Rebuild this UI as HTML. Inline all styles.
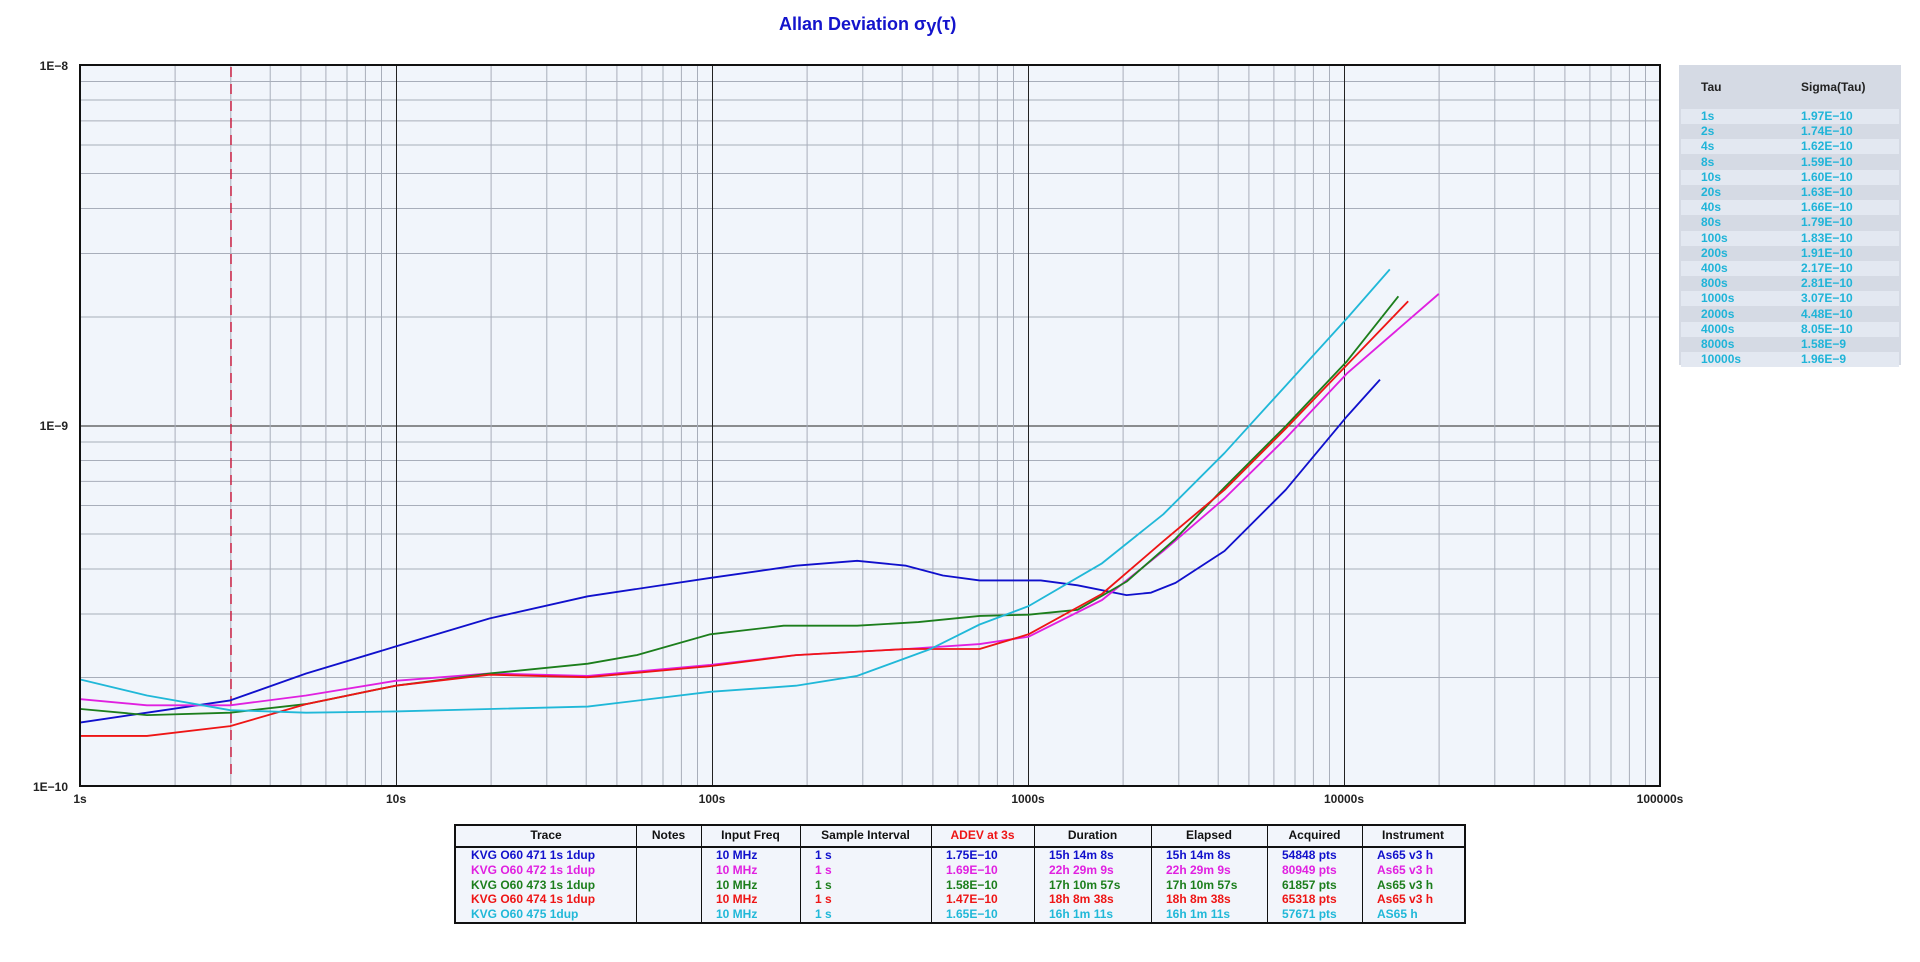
<!DOCTYPE html>
<html><head><meta charset="utf-8"><style>
body{margin:0;width:1920px;height:962px;background:#fff;overflow:hidden;font-family:"Liberation Sans",sans-serif;position:relative}
.t{position:absolute;font-weight:bold}
#tbl{position:absolute;left:454px;top:824px;width:1012px;height:100px;border:2px solid #111;box-sizing:border-box;background:#f2f5fb;overflow:hidden}
#tbl .hd{position:absolute;left:0;top:0;right:0;height:20px;border-bottom:2px solid #111}
.col{position:absolute;top:0;bottom:0;border-left:1px solid #111}
.c{position:absolute;font:bold 12px "Liberation Sans Narrow","Liberation Sans",sans-serif;white-space:nowrap;line-height:15px}
#panel{position:absolute;left:1679px;top:65px;width:222px;height:300px;background:#d5dae4}
.r{position:absolute;left:2px;right:2px;height:15px;font:bold 12px "Liberation Sans Narrow","Liberation Sans",sans-serif;color:#1fb4d8;line-height:15px}
</style></head><body>
<div class="t" style="left:779px;top:14px;font-size:18px;color:#1414cc">Allan Deviation σ<sub style="font-size:18px;position:relative;top:2px;vertical-align:baseline">y</sub>(τ)</div>

<svg width="1920" height="962" style="position:absolute;left:0;top:0">
<defs>
<pattern id="pv" patternUnits="userSpaceOnUse" x="80" y="0" width="316" height="962">
<g stroke="#a8aeba" stroke-width="1">
<line x1="95.1" y1="0" x2="95.1" y2="962"/><line x1="150.8" y1="0" x2="150.8" y2="962"/><line x1="190.2" y1="0" x2="190.2" y2="962"/><line x1="220.9" y1="0" x2="220.9" y2="962"/><line x1="245.9" y1="0" x2="245.9" y2="962"/><line x1="267" y1="0" x2="267" y2="962"/><line x1="285.4" y1="0" x2="285.4" y2="962"/><line x1="301.5" y1="0" x2="301.5" y2="962"/></g>
<line x1="0.5" y1="0" x2="0.5" y2="962" stroke="#222" stroke-width="1"/>
</pattern>
<pattern id="ph" patternUnits="userSpaceOnUse" x="0" y="65" width="1920" height="360.5">
<g stroke="#a8aeba" stroke-width="1">
<line x1="0" x2="1920" y1="252" y2="252"/><line x1="0" x2="1920" y1="188.5" y2="188.5"/><line x1="0" x2="1920" y1="143.5" y2="143.5"/><line x1="0" x2="1920" y1="108.5" y2="108.5"/><line x1="0" x2="1920" y1="80" y2="80"/><line x1="0" x2="1920" y1="55.9" y2="55.9"/><line x1="0" x2="1920" y1="35" y2="35"/><line x1="0" x2="1920" y1="16.5" y2="16.5"/></g>
<line x1="0" x2="1920" y1="0.5" y2="0.5" stroke="#222"/>
</pattern>
</defs>
<rect x="80" y="65" width="1580" height="721" fill="#f1f5fb"/>
<rect x="80" y="65" width="1580" height="721" fill="url(#ph)"/>
<rect x="80" y="65" width="1580" height="721" fill="url(#pv)"/>
<line x1="231" y1="67" x2="231" y2="776" stroke="#cc2244" stroke-width="1.5" stroke-dasharray="10,7"/>
<g transform="scale(1.2245)" fill="none" stroke-width="1.5" stroke-linejoin="round">
<polyline stroke="#1010cc" points="66,590 120,582 188,572 250,550 323,528 400,505 480,487 580,472 650,462 700,458 740,462 770,470 800,474 850,474 880,478 920,486 940,484 960,476 1000,450 1050,400 1100,340 1127,310"/>
<polyline stroke="#e020e0" points="66,571 120,576 188,576 250,568 323,556 400,550 480,552 580,543 650,535 740,530 800,526 840,520 900,490 950,450 1000,407 1050,358 1100,305 1175,240"/>
<polyline stroke="#1c7e1c" points="66,579 120,584 188,582 250,575 323,560 400,550 480,542 520,535 580,518 640,511 700,511 750,508 800,503 840,502 880,498 920,475 960,440 1000,398 1050,348 1100,295 1142,242"/>
<polyline stroke="#ee1515" points="66,601 120,601 188,593 250,575 323,560 400,551 480,553 580,544 650,535 740,530 800,530 840,518 900,485 950,442 1000,400 1050,350 1100,298 1150,246"/>
<polyline stroke="#20b8d8" points="66,555 120,568 188,580 250,582 323,581 400,579 480,577 580,565 650,560 700,552 760,530 800,510 840,495 900,460 950,420 1000,370 1050,315 1100,260 1135,220"/>
</g>
<rect x="80" y="65" width="1580" height="721" fill="none" stroke="#111" stroke-width="2"/>
<g font-family="Liberation Sans Narrow, Liberation Sans, sans-serif" font-weight="bold" font-size="12" fill="#222">
<text x="68" y="70" text-anchor="end">1E−8</text>
<text x="68" y="430" text-anchor="end">1E−9</text>
<text x="68" y="791" text-anchor="end">1E−10</text>
<text x="80" y="803" text-anchor="middle">1s</text>
<text x="396" y="803" text-anchor="middle">10s</text>
<text x="712" y="803" text-anchor="middle">100s</text>
<text x="1028" y="803" text-anchor="middle">1000s</text>
<text x="1344" y="803" text-anchor="middle">10000s</text>
<text x="1660" y="803" text-anchor="middle">100000s</text>
</g>
</svg>

<div id="panel">
<div class="c" style="left:22px;top:15px;color:#222">Tau</div>
<div class="c" style="left:122px;top:15px;color:#222">Sigma(Tau)</div>
</div>

<div id="tbl">
<div class="hd"></div>
<div class="col" style="left:180px"></div><div class="col" style="left:245px"></div><div class="col" style="left:344px"></div><div class="col" style="left:475px"></div><div class="col" style="left:578px"></div><div class="col" style="left:695px"></div><div class="col" style="left:811px"></div><div class="col" style="left:906px"></div>
</div>

<script>
var taus=["1s","2s","4s","8s","10s","20s","40s","80s","100s","200s","400s","800s","1000s","2000s","4000s","8000s","10000s"];
var sig=["1.97E−10","1.74E−10","1.62E−10","1.59E−10","1.60E−10","1.63E−10","1.66E−10","1.79E−10","1.83E−10","1.91E−10","2.17E−10","2.81E−10","3.07E−10","4.48E−10","8.05E−10","1.58E−9","1.96E−9"];
var p=document.getElementById('panel'),h='';
for(var i=0;i<17;i++){h+='<div class="r" style="top:'+(44+i*15.2)+'px;background:'+(i%2?'#d5dae4':'#e3e8f1')+'"><span style="position:absolute;left:20px">'+taus[i]+'</span><span style="position:absolute;left:120px">'+sig[i]+'</span></div>';}
p.innerHTML+=h;
var t=document.getElementById('tbl');
var cx=[[0,180],[180,245],[245,344],[344,475],[475,578],[578,695],[695,811],[811,906],[906,1008]];
var hd=["Trace","Notes","Input Freq","Sample Interval","ADEV at 3s","Duration","Elapsed","Acquired","Instrument"];
var s='';
for(var j=0;j<9;j++){s+='<div class="c" style="left:'+cx[j][0]+'px;width:'+(cx[j][1]-cx[j][0])+'px;text-align:center;top:2px;color:'+(j==4?'#ee1515':'#111')+'">'+hd[j]+'</div>';}
var cols=["#1010cc","#e020e0","#1c7e1c","#ee1515","#20b8d8"];
var rows=[["KVG O60 471 1s 1dup","","10 MHz","1 s","1.75E−10","15h 14m 8s","15h 14m 8s","54848 pts","As65 v3 h"],
["KVG O60 472 1s 1dup","","10 MHz","1 s","1.69E−10","22h 29m 9s","22h 29m 9s","80949 pts","As65 v3 h"],
["KVG O60 473 1s 1dup","","10 MHz","1 s","1.58E−10","17h 10m 57s","17h 10m 57s","61857 pts","As65 v3 h"],
["KVG O60 474 1s 1dup","","10 MHz","1 s","1.47E−10","18h 8m 38s","18h 8m 38s","65318 pts","As65 v3 h"],
["KVG O60 475 1dup","","10 MHz","1 s","1.65E−10","16h 1m 11s","16h 1m 11s","57671 pts","AS65 h"]];
for(var r=0;r<5;r++)for(var j=0;j<9;j++){s+='<div class="c" style="left:'+(cx[j][0]+15)+'px;top:'+(22+r*14.8)+'px;color:'+cols[r]+'">'+rows[r][j]+'</div>';}
t.innerHTML+=s;
</script>
</body></html>
